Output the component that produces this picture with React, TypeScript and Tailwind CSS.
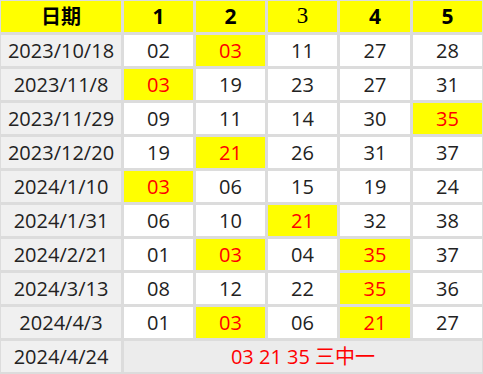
import React from "react";

const rows: { date: string; nums: string[]; hits: number[] }[] = [
  { date: "2023/10/18", nums: ["02", "03", "11", "27", "28"], hits: [1] },
  { date: "2023/11/8", nums: ["03", "19", "23", "27", "31"], hits: [0] },
  { date: "2023/11/29", nums: ["09", "11", "14", "30", "35"], hits: [4] },
  { date: "2023/12/20", nums: ["19", "21", "26", "31", "37"], hits: [1] },
  { date: "2024/1/10", nums: ["03", "06", "15", "19", "24"], hits: [0] },
  { date: "2024/1/31", nums: ["06", "10", "21", "32", "38"], hits: [2] },
  { date: "2024/2/21", nums: ["01", "03", "04", "35", "37"], hits: [1, 3] },
  { date: "2024/3/13", nums: ["08", "12", "22", "35", "36"], hits: [3] },
  { date: "2024/4/3", nums: ["01", "03", "06", "21", "27"], hits: [1, 3] },
];

const font = { fontFamily: '"Open Sans", "Noto Sans CJK TC", sans-serif' };

export default function App() {
  return (
    <div
      className="w-[483px] h-[374px] bg-[#dcdcdc] pl-px pt-px pr-[2px] pb-[2px] grid grid-cols-[120px_69px_69px_69px_70px_69px] grid-rows-[repeat(11,31px)] gap-[3px] text-[20px] text-[#222]"
      style={font}
    >
      <div className="bg-[#ffff00] flex items-center justify-center font-bold text-[20px] text-black">日期</div>
      <div className="bg-[#ffff00] flex items-center justify-center font-bold text-[21px] text-black">1</div>
      <div className="bg-[#ffff00] flex items-center justify-center font-bold text-[21px] text-black">2</div>
      <div className="bg-[#ffff00] flex items-center justify-center text-[23px] text-black" style={{ fontFamily: '"Liberation Serif", serif' }}>3</div>
      <div className="bg-[#ffff00] flex items-center justify-center font-bold text-[21px] text-black">4</div>
      <div className="bg-[#ffff00] flex items-center justify-center font-bold text-[21px] text-black">5</div>
      {rows.map((r) => (
        <React.Fragment key={r.date}>
          <div className="bg-[#f0f0f0] flex items-center justify-center">{r.date}</div>
          {r.nums.map((n, i) =>
            r.hits.includes(i) ? (
              <div key={i} className="bg-[#ffff00] flex items-center justify-center text-[#ff0000]">{n}</div>
            ) : (
              <div key={i} className="bg-white flex items-center justify-center">{n}</div>
            )
          )}
        </React.Fragment>
      ))}
      <div className="bg-[#f0f0f0] flex items-center justify-center">2024/4/24</div>
      <div className="col-span-5 bg-[#ececec] flex items-center justify-center text-[#ff0000]">03 21 35 三中一</div>
    </div>
  );
}
